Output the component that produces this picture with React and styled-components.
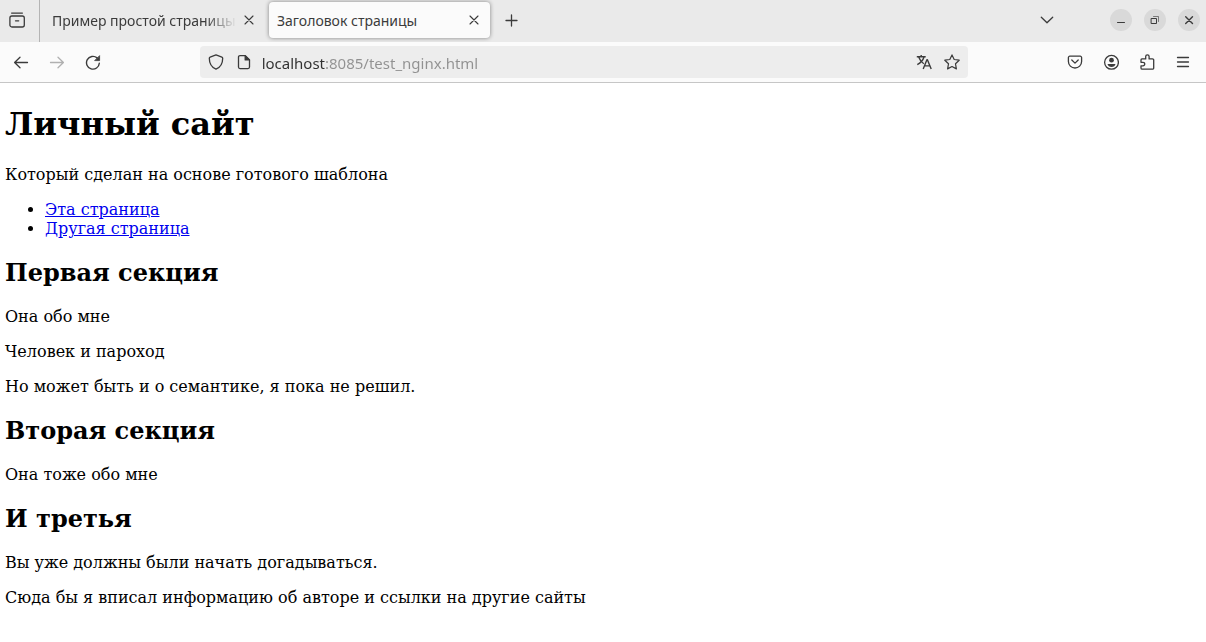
import React from "react";
import styled, { createGlobalStyle } from "styled-components";

const UI_FONT = '"Noto Sans", "Open Sans", sans-serif';

const GlobalStyle = createGlobalStyle`
  *, *::before, *::after { box-sizing: border-box; }
  body { margin: 0; background: #fff; }
`;

const Browser = styled.div`
  display: flex;
  flex-direction: column;
  min-height: 100vh;
`;

const TabBar = styled.header`
  display: flex;
  height: 42px;
  background: #eaeaea;
  color: #3b3b3b;
  font-family: ${UI_FONT};
`;

const IconButton = styled.button`
  display: flex;
  align-items: center;
  justify-content: center;
  flex: none;
  width: ${(p) => p.$width || 36}px;
  padding: 0;
  border: 0;
  background: none;
  color: #3b3b3b;

  &:disabled { color: #b0b0b0; }
`;

const RecentArea = styled.div`
  display: flex;
  flex: none;
  width: 40px;
  padding: 0 5px 2px 0;
  border-right: 1px solid #b4b4b4;
`;

const Tabs = styled.div`
  display: flex;
  padding: 2px 0 4px 4px;
`;

const Tab = styled.div`
  display: flex;
  align-items: center;
  width: 221px;
  margin-right: 4px;
  padding-left: 8px;
  padding-right: 4px;
  border-radius: 4px;
  background: ${(p) => (p.$active ? "#fbfbfb" : "transparent")};
  box-shadow: ${(p) => (p.$active ? "0 0 4px rgba(0, 0, 0, 0.45)" : "none")};
`;

const TabTitle = styled.button`
  flex: 1;
  min-width: 0;
  padding: 2px 0 0;
  border: 0;
  background: none;
  color: inherit;
  font: 14px/20px ${UI_FONT};
  text-align: left;
  white-space: nowrap;
  overflow: hidden;
  mask-image: ${(p) => (p.$fade ? "linear-gradient(to left, transparent, #000 32px)" : "none")};
`;

const WindowControls = styled.div`
  display: flex;
  align-items: center;
  gap: 12px;
  margin-left: auto;
  padding: 0 6px 2px 0;
`;

const ListTabs = styled(IconButton)`
  margin-right: 33px;
`;

const WindowButton = styled(IconButton)`
  height: 22px;
  border-radius: 11px;
  background: #d9d9d9;
`;

const NavBar = styled.nav`
  display: flex;
  height: 41px;
  padding: 0 5px 0 3px;
  background: #fbfbfb;
  border-bottom: 1px solid #c6c6c6;
`;

const Spring = styled.div`
  flex: 89 1 0;
`;

const AddressBar = styled.form`
  display: flex;
  flex: 768 1 0;
  min-width: 0;
  margin: 4px 0;
  padding: 0 2px;
  border-radius: 4px;
  background: #ededed;
`;

const AddressInput = styled.input`
  flex: 1;
  min-width: 0;
  margin-left: 4px;
  padding: 2px 0 0;
  border: 0;
  outline: 0;
  background: linear-gradient(to right, #303030 63px, #919191 63px);
  background-clip: text;
  -webkit-text-fill-color: transparent;
  font: 15px/20px ${UI_FONT};
`;

const Page = styled.main`
  padding: 0 5px;
  color: #000;
  font: 16px/19px "DejaVu Serif", serif;
`;

const Title = styled.h1`
  margin: 22px 0;
  font-size: 32px;
  line-height: 38px;
`;

const SectionTitle = styled.h2`
  margin: 21px 0 20px;
  font-size: 24px;
  line-height: 28px;
`;

const Text = styled.p`
  margin: 16px 0;
`;

const Links = styled.ul`
  margin: 16px 0;
  padding-left: 40px;
`;

const Link = styled.a`
  color: #0000ee;
`;

const Svg = ({ size = 16, w = 1.3, children }) => (
  <svg
    width={size}
    height={size}
    viewBox="0 0 16 16"
    fill="none"
    stroke="currentColor"
    strokeWidth={w}
    strokeLinecap="round"
    strokeLinejoin="round"
    aria-hidden="true"
  >
    {children}
  </svg>
);

const CloseIcon = () => (
  <Svg w={1.1}>
    <path d="M4 4l8 8M12 4l-8 8" />
  </Svg>
);

const tabs = [
  { title: "Пример простой страницы" },
  { title: "Заголовок страницы", active: true },
];

export default function App() {
  return (
    <Browser>
      <GlobalStyle />
      <TabBar>
        <RecentArea>
          <IconButton $width={34} aria-label="Недавние">
            <Svg>
              <path d="M2.6 1.1h10.8" />
              <rect x="0.9" y="4" width="14.4" height="11" rx="2" />
              <path d="M6.5 8.8h3.2" />
            </Svg>
          </IconButton>
        </RecentArea>
        <Tabs>
          {tabs.map((tab) => (
            <Tab key={tab.title} $active={tab.active}>
              <TabTitle $fade={!tab.active}>{tab.title}</TabTitle>
              <IconButton $width={24} aria-label="Закрыть вкладку">
                <CloseIcon />
              </IconButton>
            </Tab>
          ))}
          <IconButton aria-label="Новая вкладка">
            <Svg>
              <path d="M7.5 3v11M2 8.5h11" />
            </Svg>
          </IconButton>
        </Tabs>
        <WindowControls>
          <ListTabs aria-label="Список вкладок">
            <Svg>
              <path d="M2.3 5.2L8 10.8l5.7-5.6" />
            </Svg>
          </ListTabs>
          <WindowButton $width={22} aria-label="Свернуть">
            <Svg w={1}>
              <path d="M4.5 10.5h7" />
            </Svg>
          </WindowButton>
          <WindowButton $width={22} aria-label="Восстановить">
            <Svg w={1}>
              <path d="M4.5 6.5h5v5h-5z" />
              <path d="M6.5 4.5h5v5" opacity="0.6" />
            </Svg>
          </WindowButton>
          <WindowButton $width={22} aria-label="Закрыть">
            <Svg w={1.4}>
              <path d="M4.7 4.7l6.8 6.8M11.5 4.7l-6.8 6.8" />
            </Svg>
          </WindowButton>
        </WindowControls>
      </TabBar>
      <NavBar>
        <IconButton aria-label="Назад">
          <Svg>
            <path d="M14.5 8.5H1.8M7 3.2L1.6 8.5 7 13.8" />
          </Svg>
        </IconButton>
        <IconButton disabled aria-label="Вперёд">
          <Svg>
            <path d="M1.5 8.5h12.7M9 3.2l5.4 5.3L9 13.8" />
          </Svg>
        </IconButton>
        <IconButton aria-label="Обновить">
          <Svg w={1.4}>
            <path d="M14.3 9.2a6.4 6.4 0 1 1-2.2-5.3" />
            <path d="M14.6 2v4.6H10z" fill="currentColor" strokeWidth="0.8" />
          </Svg>
        </IconButton>
        <Spring />
        <AddressBar>
          <IconButton type="button" $width={28} aria-label="Защита">
            <Svg>
              <path d="M8 .9l5.900 2.200c.5.2.8.6.8 1.100 0 4.700-1.800 8.900-6.700 10.900C3.100 13.100 1.300 8.900 1.300 4.200c0-.5.3-.9.8-1.100z" />
            </Svg>
          </IconButton>
          <IconButton type="button" $width={28} aria-label="Сведения о сайте">
            <Svg>
              <path d="M9.200 1.600H4A1.500 1.500 0 0 0 2.500 3.100v10A1.500 1.500 0 0 0 4 14.600h8a1.500 1.500 0 0 0 1.500-1.500V5.900z" />
              <path d="M9.200 1.600v4.300h4.300z" fill="currentColor" />
            </Svg>
          </IconButton>
          <AddressInput aria-label="Адрес" defaultValue="localhost:8085/test_nginx.html" />
          <IconButton type="button" $width={28} aria-label="Перевести страницу">
            <Svg w={1.4}>
              <path
                d="M.8 2.800h8.900M5.200.9v1.900M8 3C7 6.300 4.600 8.900 1.300 10.600M2.800 3.200c1 2.800 2.700 5 5 6.600"
                strokeLinecap="butt"
              />
              <path d="M7.200 15l3.700-9.200h.5L15.200 15M8.600 11.900h5.200" strokeLinecap="butt" />
            </Svg>
          </IconButton>
          <IconButton type="button" $width={28} aria-label="Добавить в закладки">
            <Svg w={1.2}>
              <path d="M8 .9l2.200 4.600 5 .7-3.700 3.600.9 5.100L8 12.500l-4.400 2.400.9-5.100L.8 6.200l5-.7z" />
            </Svg>
          </IconButton>
        </AddressBar>
        <Spring />
        <IconButton aria-label="Pocket">
          <Svg>
            <path d="M2.800 2.200h10.400a1.400 1.400 0 0 1 1.400 1.400v4a6.600 6.400 0 0 1-13.200 0v-4a1.400 1.400 0 0 1 1.400-1.400z" />
            <path d="M4.800 6L8 9.100 11.200 6" />
          </Svg>
        </IconButton>
        <IconButton aria-label="Аккаунт">
          <Svg>
            <circle cx="8.5" cy="8.3" r="6.9" />
            <circle cx="8.5" cy="6.2" r="2.4" fill="currentColor" stroke="none" />
            <path d="M4.500 10h8c-.4 1.800-2 3-4 3s-3.600-1.200-4-3z" fill="currentColor" stroke="none" />
          </Svg>
        </IconButton>
        <IconButton aria-label="Расширения">
          <Svg>
            <path d="M3 4.900h3.700V2.500a1.700 1.700 0 0 1 3.400 0v2.400h3.400a1.200 1.200 0 0 1 1.200 1.200v7.800a1.200 1.200 0 0 1-1.200 1.200H3.200A1.200 1.200 0 0 1 2 13.900v-2.100h2a1.700 1.700 0 0 0 0-3.500H2V6.100A1.200 1.200 0 0 1 3 4.900z" />
          </Svg>
        </IconButton>
        <IconButton aria-label="Меню">
          <Svg>
            <path d="M2.500 3.500h11M2.500 8h11M2.500 12.500h11" />
          </Svg>
        </IconButton>
      </NavBar>
      <Page>
        <Title>Личный сайт</Title>
        <Text>Который сделан на основе готового шаблона</Text>
        <Links>
          <li><Link href="#this">Эта страница</Link></li>
          <li><Link href="#other">Другая страница</Link></li>
        </Links>
        <SectionTitle>Первая секция</SectionTitle>
        <Text>Она обо мне</Text>
        <Text>Человек и пароход</Text>
        <Text>Но может быть и о семантике, я пока не решил.</Text>
        <SectionTitle>Вторая секция</SectionTitle>
        <Text>Она тоже обо мне</Text>
        <SectionTitle>И третья</SectionTitle>
        <Text>Вы уже должны были начать догадываться.</Text>
        <Text>Сюда бы я вписал информацию об авторе и ссылки на другие сайты</Text>
      </Page>
    </Browser>
  );
}
